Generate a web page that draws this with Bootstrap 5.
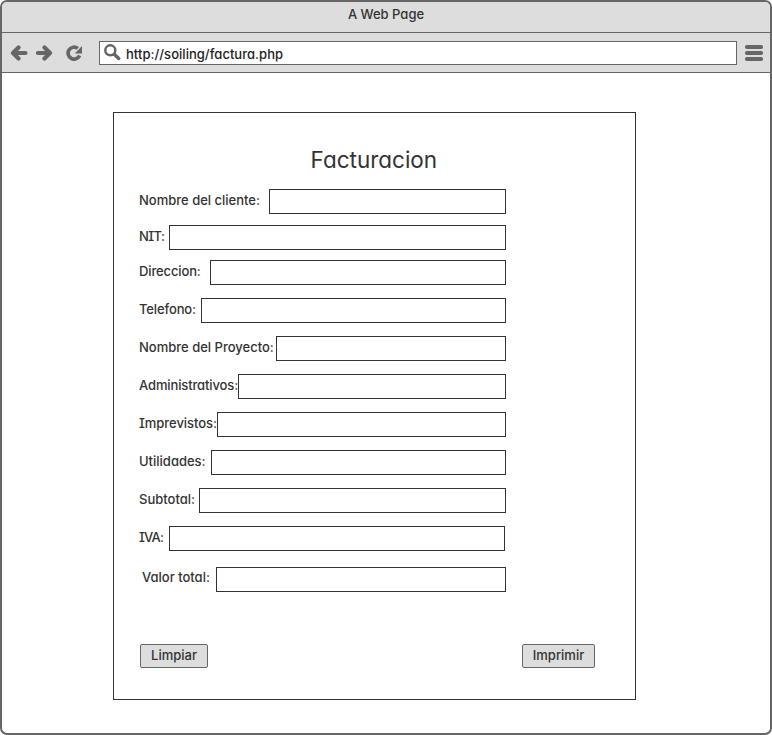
<!DOCTYPE html>
<html lang="es">
<head>
<meta charset="utf-8">
<meta name="viewport" content="width=device-width, initial-scale=1">
<title>A Web Page</title>
<link href="https://cdn.jsdelivr.net/npm/bootstrap@5.3.0/dist/css/bootstrap.min.css" rel="stylesheet">
<style>
body{font-family:Inter,"Open Sans",sans-serif;font-size:13px;font-weight:500;font-feature-settings:"cv11","cv08";color:#333;background:#fff}
.browser{height:735px;border:2px solid #666;border-radius:7px;background:#fff}
.titlebar{height:31px;background:#ddd;border-bottom:1px solid #666;line-height:25px}
.toolbar{height:40px;background:#ddd;border-bottom:1px solid #666;padding:0 7px 0 8px}
.toolbar svg{fill:#666}
.address{height:24px;margin-left:7px;margin-right:8px;border:1px solid #666;background:#fff;padding:0 4px}
.address input{font:inherit;font-feature-settings:inherit;color:#222;letter-spacing:.03px;padding:2px 0 0 5px;line-height:18px}
.sheet{width:523px;height:588px;margin:39px 0 0 111px;border:1px solid #333;padding:29px 40px 31px 25px}
.sheet h1{font-size:22.5px;font-weight:400;line-height:36px;margin:0 0 11px 171.500px;color:#333}
.entry{width:367px;height:25px;margin-bottom:13px}
.entry label{line-height:22px}
.entry input{width:var(--w);height:25px;border:1px solid #333;border-radius:0;background:#fff;padding:0 6px}
.e1{--w:237px;margin-bottom:11px}
.e2{--w:337px;margin-bottom:10px}
.e3{--w:296px}
.e4{--w:305px}
.e5{--w:230px}
.e6{--w:268px}
.e7{--w:289px}
.e8{--w:295px}
.e9{--w:307px}
.e10{--w:336px;padding-right:1px;margin-bottom:16px}
.e11{--w:290px}
.e3 label,.e4 label,.e6 label{letter-spacing:-.13px}
.e7 label{letter-spacing:-.05px}
.e2 label{letter-spacing:-.6px}
.e10 label{letter-spacing:-.8px}
.e11 label{line-height:20px;padding-left:3px}
.plain-btn{width:73px;height:24px;border:1px solid #666;border-radius:2px;background:#ddd;color:#333;font-size:13px;font-weight:500;line-height:20px;padding:0 0 2px}
.plain-btn.clear{width:68px;margin-left:1px}
</style>
</head>
<body>
<div class="browser d-flex flex-column overflow-hidden">
  <header class="titlebar text-center flex-shrink-0">A Web Page</header>
  <nav class="toolbar d-flex align-items-center flex-shrink-0">
    <svg width="18" height="16" viewBox="0 0 18 16" role="img" aria-label="Back"><path d="M3 8 8.500 2.500M3 8l5.500 5.500M3 8h12.500" fill="none" stroke="#666" stroke-width="4.200" stroke-linecap="round" stroke-linejoin="round"/></svg>
    <svg class="ms-2" width="18" height="16" viewBox="0 0 18 16" role="img" aria-label="Forward"><path d="M14 8 8.500 2.500M14 8l-5.500 5.500M14 8H2" fill="none" stroke="#666" stroke-width="4.200" stroke-linecap="round" stroke-linejoin="round"/></svg>
    <svg class="ms-2" width="30" height="16" viewBox="-4 0 30 16" role="img" aria-label="Reload"><path d="M13.600 10.600A6 6 0 1 1 11.800 3.400" fill="none" stroke="#666" stroke-width="3.700"/><path d="M16 1v7.400H8.800z"/></svg>
    <div class="address d-flex align-items-center flex-fill">
      <svg width="17" height="17" viewBox="0 0 17 17" aria-hidden="true"><circle cx="6.300" cy="6.300" r="5" fill="none" stroke="#666" stroke-width="2.500"/><path d="m10.500 10.500 4.200 4" stroke="#666" stroke-width="3.400" stroke-linecap="round"/></svg>
      <input class="border-0 bg-transparent flex-fill" type="text" value="http://soiling/factura.php" aria-label="Address">
    </div>
    <svg width="18" height="16" viewBox="0 0 18 16" role="img" aria-label="Menu"><rect width="18" height="4" rx="1.800"/><rect y="6" width="18" height="4" rx="1.800"/><rect y="12" width="18" height="4" rx="1.800"/></svg>
  </nav>
  <main>
    <form class="sheet d-flex flex-column">
      <h1>Facturacion</h1>
      <div class="entry e1 d-flex justify-content-between"><label for="f1" class="text-nowrap">Nombre del cliente:</label><input id="f1" class="flex-shrink-0"></div>
      <div class="entry e2 d-flex justify-content-between"><label for="f2" class="text-nowrap">NIT:</label><input id="f2" class="flex-shrink-0"></div>
      <div class="entry e3 d-flex justify-content-between"><label for="f3" class="text-nowrap">Direccion:</label><input id="f3" class="flex-shrink-0"></div>
      <div class="entry e4 d-flex justify-content-between"><label for="f4" class="text-nowrap">Telefono:</label><input id="f4" class="flex-shrink-0"></div>
      <div class="entry e5 d-flex justify-content-between"><label for="f5" class="text-nowrap">Nombre del Proyecto:</label><input id="f5" class="flex-shrink-0"></div>
      <div class="entry e6 d-flex justify-content-between"><label for="f6" class="text-nowrap">Administrativos:</label><input id="f6" class="flex-shrink-0"></div>
      <div class="entry e7 d-flex justify-content-between"><label for="f7" class="text-nowrap">Imprevistos:</label><input id="f7" class="flex-shrink-0"></div>
      <div class="entry e8 d-flex justify-content-between"><label for="f8" class="text-nowrap">Utilidades:</label><input id="f8" class="flex-shrink-0"></div>
      <div class="entry e9 d-flex justify-content-between"><label for="f9" class="text-nowrap">Subtotal:</label><input id="f9" class="flex-shrink-0"></div>
      <div class="entry e10 d-flex justify-content-between"><label for="f10" class="text-nowrap">IVA:</label><input id="f10" class="flex-shrink-0"></div>
      <div class="entry e11 d-flex justify-content-between"><label for="f11" class="text-nowrap">Valor total:</label><input id="f11" class="flex-shrink-0"></div>
      <div class="d-flex justify-content-between mt-auto">
        <button type="reset" class="btn plain-btn clear">Limpiar</button>
        <button type="button" class="btn plain-btn">Imprimir</button>
      </div>
    </form>
  </main>
</div>
<script src="https://cdn.jsdelivr.net/npm/bootstrap@5.3.0/dist/js/bootstrap.bundle.min.js"></script>
</body>
</html>
